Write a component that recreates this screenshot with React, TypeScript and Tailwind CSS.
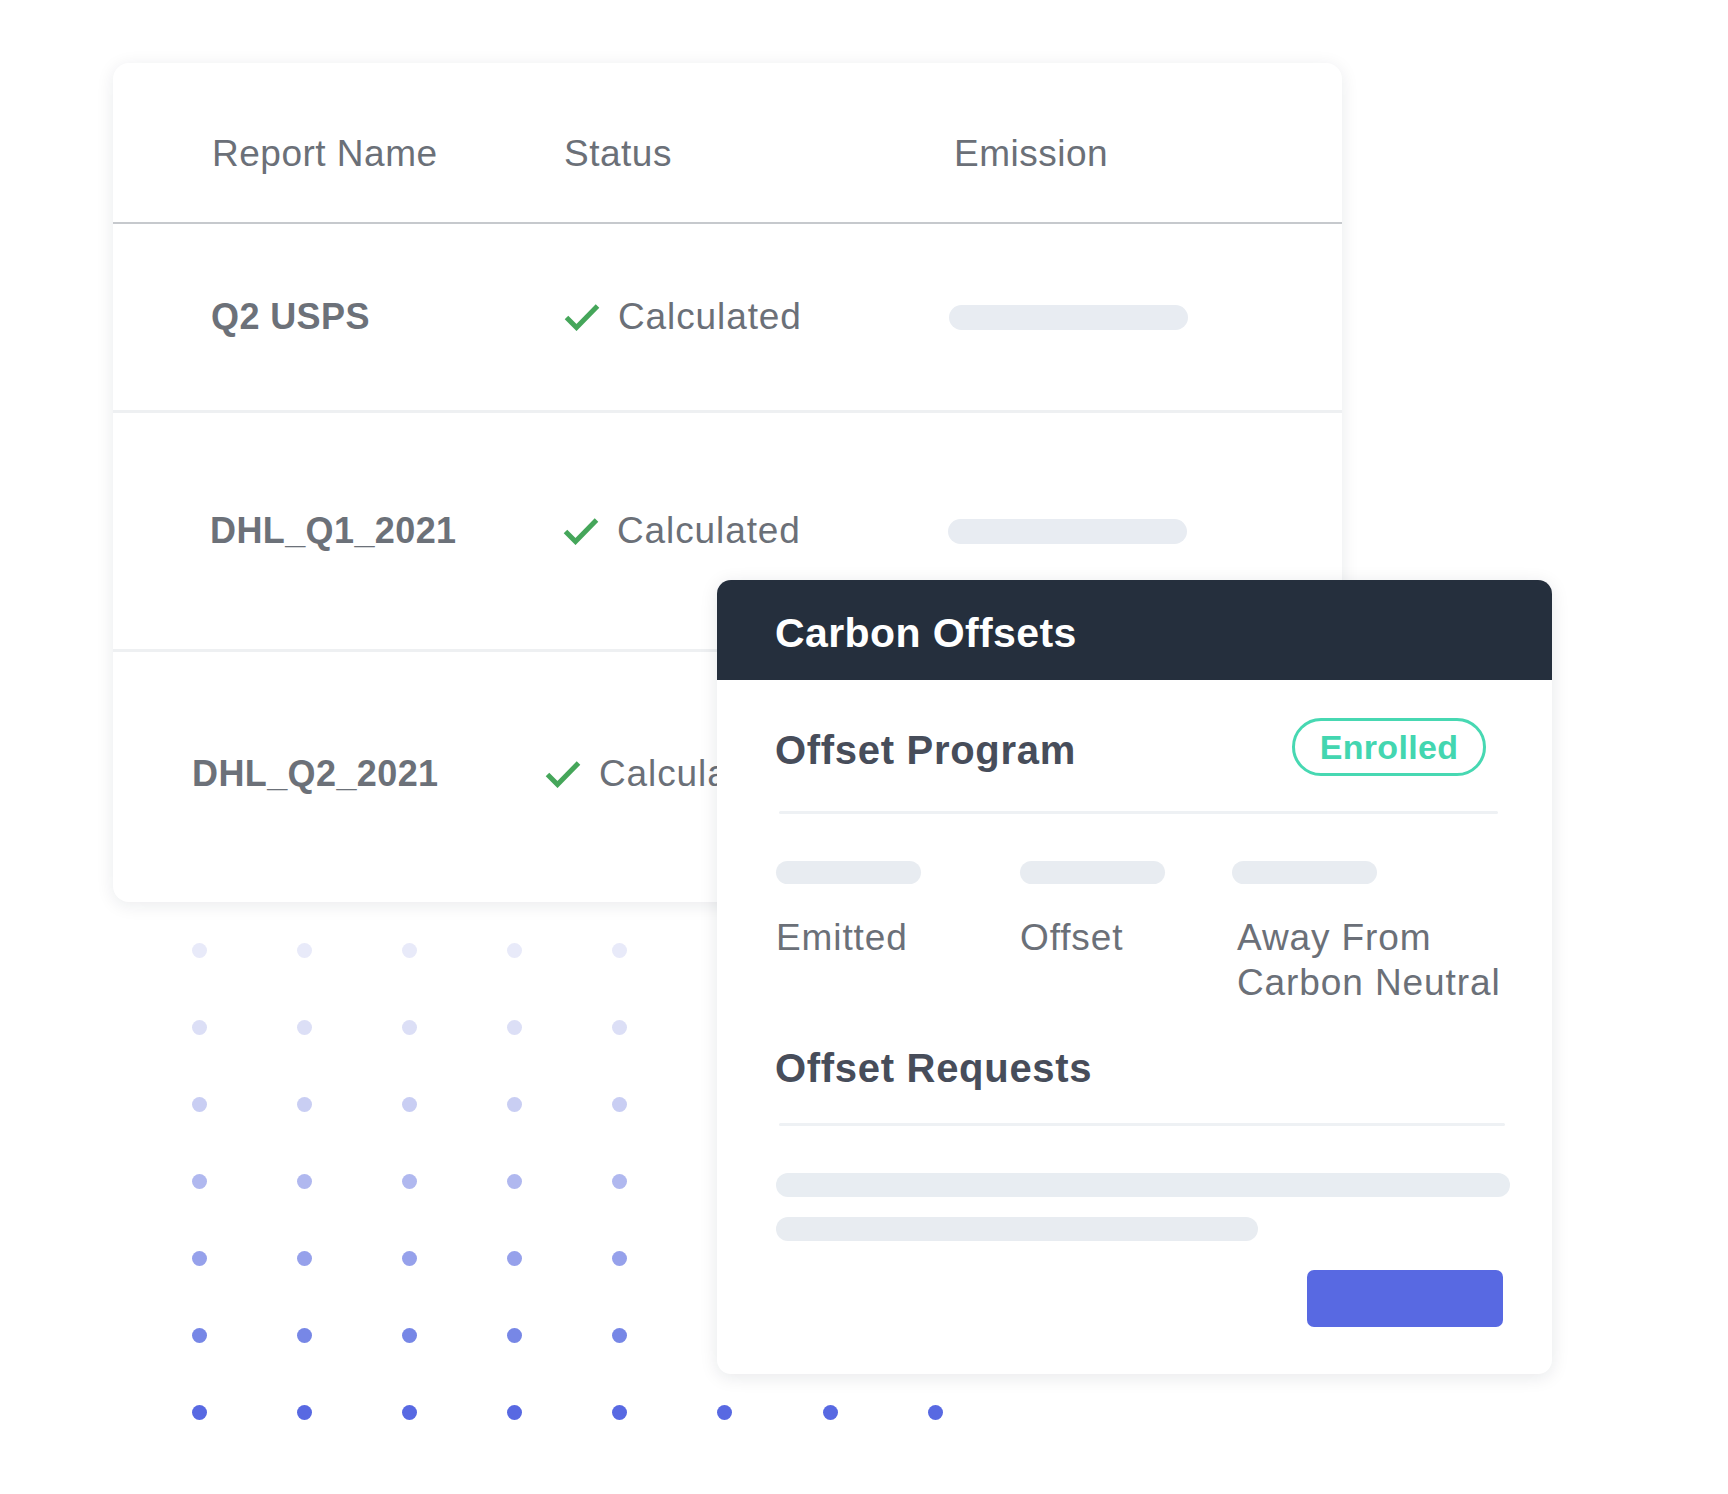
import React from "react";

const font = { fontFamily: '"Liberation Sans", Arial, sans-serif' };

const CheckIcon: React.FC = () => (
  <svg width="36" height="28" viewBox="0 0 36 28" fill="none" className="shrink-0">
    <polyline
      points="2.5,14.5 12.5,24.5 33.5,3"
      stroke="#45a65a"
      strokeWidth="5"
      strokeLinecap="butt"
      strokeLinejoin="miter"
    />
  </svg>
);

interface Row {
  name: string;
  height: string;
  pad: string;
  last?: boolean;
}

const rows: Row[] = [
  { name: "Q2 USPS", height: "h-[186px]", pad: "pl-[98px]" },
  { name: "DHL_Q1_2021", height: "h-[236px]", pad: "pl-[97px]" },
  { name: "DHL_Q2_2021", height: "h-[250px] pb-[6px]", pad: "pl-[79px]", last: true },
];

const dotRows = [
  "bg-[#e8eaf9]",
  "bg-[#dcdff6]",
  "bg-[#c9cef3]",
  "bg-[#b0b8ef]",
  "bg-[#96a1eb]",
  "bg-[#7787e6]",
  "bg-[#5869e2]",
];

const ReportTable: React.FC = () => (
  <div className="ml-[113px] w-[1229px] rounded-2xl bg-white shadow-[0_3px_18px_rgba(20,30,50,0.09)]">
    <div className="h-[159px] pl-[99px] pt-[22px] grid grid-cols-[352px_390px_1fr] items-center text-[37px] tracking-[0.5px] text-[#6b7078]">
      <div>Report Name</div>
      <div>Status</div>
      <div>Emission</div>
    </div>
    <div className="h-[2px] bg-[#c6c9cd]" />
    {rows.map((row) => (
      <div key={row.name}>
        <div
          className={`${row.height} ${row.pad} grid grid-cols-[353px_390px_1fr] items-center`}
        >
          <div className="text-[36px] font-bold tracking-[0.4px] text-[#6c7179]">{row.name}</div>
          <div className="flex items-center gap-[18px] text-[37px] tracking-[0.9px] text-[#6b7078]">
            <CheckIcon />
            <span>Calculated</span>
          </div>
          <div>
            <div className="ml-[-5px] h-[25px] w-[239px] rounded-full bg-[#e8ecf2]" />
          </div>
        </div>
        {!row.last && <div className="h-[3px] bg-[#eef0f2]" />}
      </div>
    ))}
  </div>
);

const DotGrid: React.FC = () => (
  <div className="mt-[41px] ml-[192px] flex flex-col gap-[62px]">
    {dotRows.map((color) => (
      <div key={color} className="flex gap-[90.1px]">
        {Array.from({ length: 8 }).map((_, i) => (
          <div key={i} className={`h-[15px] w-[15px] rounded-full ${color}`} />
        ))}
      </div>
    ))}
  </div>
);

const CarbonOffsets: React.FC = () => (
  <div className="absolute left-[717px] top-[580px] w-[835px] rounded-[14px] bg-white shadow-[0_3px_18px_rgba(20,30,50,0.10)]">
    <div className="h-[100px] rounded-t-[14px] bg-[#252f3d] pl-[58px] pt-[8px] flex items-center">
      <span className="text-[41px] font-bold tracking-[0.4px] text-white">Carbon Offsets</span>
    </div>

    <div className="pt-[38px] pb-[47px]">
      <div className="flex items-start justify-between pl-[58px] pr-[66px]">
        <span className="pt-[8px] text-[40px] leading-[48px] font-bold tracking-[0.7px] text-[#474d5a]">
          Offset Program
        </span>
        <span className="flex h-[58px] w-[194px] items-center justify-center rounded-full border-[3.5px] border-[#47d8b2] text-[34px] font-bold tracking-[0.3px] text-[#43d6b0]">
          Enrolled
        </span>
      </div>

      <div className="mt-[35px] ml-[62px] mr-[54px] h-[3px] rounded-full bg-[#eef1f4]" />

      <div className="mt-[47px] ml-[59px] grid grid-cols-[244px_212px_1fr]">
        <div className="h-[23px] w-[145px] rounded-full bg-[#e8ecf1]" />
        <div className="h-[23px] w-[145px] rounded-full bg-[#e8ecf1]" />
        <div className="h-[23px] w-[145px] rounded-full bg-[#e8ecf1]" />
      </div>

      <div className="mt-[31px] ml-[59px] grid grid-cols-[244px_212px_1fr] text-[37px] leading-[45px] tracking-[0.9px] text-[#6b7078]">
        <div>Emitted</div>
        <div>Offset</div>
        <div className="pl-[5px]">
          Away From
          <br />
          Carbon Neutral
        </div>
      </div>

      <div className="mt-[39px] pl-[58px] text-[40px] leading-[48px] font-bold tracking-[0.7px] text-[#474d5a]">
        Offset Requests
      </div>

      <div className="mt-[31px] ml-[62px] mr-[47px] h-[3px] rounded-full bg-[#eef1f4]" />

      <div className="mt-[47px] ml-[59px] mr-[42px] h-[24px] rounded-full bg-[#e8edf2]" />
      <div className="mt-[20px] ml-[59px] h-[24px] w-[482px] rounded-full bg-[#e8ecf1]" />

      <div className="mt-[29px] flex justify-end pr-[49px]">
        <div className="h-[57px] w-[196px] rounded-[7px] bg-[#5869e2]" />
      </div>
    </div>
  </div>
);

export default function App() {
  return (
    <div className="relative h-[1494px] w-[1728px] overflow-hidden bg-white pt-[63px]" style={font}>
      <ReportTable />
      <DotGrid />
      <CarbonOffsets />
    </div>
  );
}
